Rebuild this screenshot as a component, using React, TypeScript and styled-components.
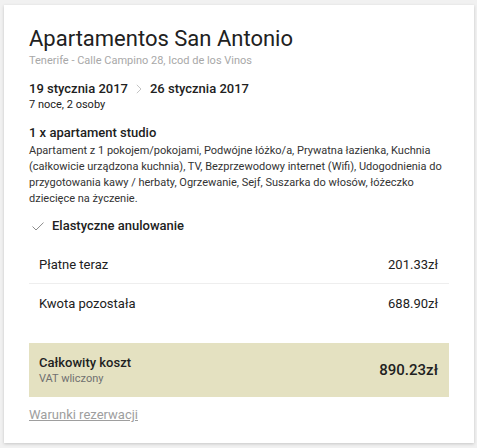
import React from "react";
import styled, { createGlobalStyle } from "styled-components";

const Global = createGlobalStyle`
  html, body { margin: 0; padding: 0; background: #f1f1f1; }
  body { font-family: Roboto, "Noto Sans", Arial, sans-serif; color: #212121; }
`;

const Page = styled.div`
  padding: 5px 3px 5px 4px;
`;

const Card = styled.div`
  background: #fff;
  width: 470px;
  height: 438px;
  box-sizing: border-box;
  padding: 20px 25px 0 25px;
  box-shadow: 0 1px 3px rgba(0,0,0,0.18);
  display: flex;
  flex-direction: column;
`;

const Title = styled.h1`
  margin: 0;
  font-size: 22px;
  font-weight: 400;
  line-height: 28px;
  color: #212121;
`;

const Address = styled.div`
  margin-top: 1px;
  font-size: 11px;
  line-height: 14px;
  color: #a8a8a8;
`;

const Dates = styled.div`
  display: flex;
  align-items: center;
  gap: 8px;
  margin-top: 12px;
  font-size: 13px;
  font-weight: 500;
  line-height: 18px;
`;

const Nights = styled.div`
  font-size: 11px;
  line-height: 14px;
  color: #212121;
`;

const Section = styled.div`
  margin-top: 12px;
`;

const Heading = styled.div`
  font-size: 13px;
  font-weight: 500;
  line-height: 18px;
`;

const Desc = styled.p`
  margin: 1px 0 0;
  font-size: 11px;
  line-height: 16px;
  color: #333;
  white-space: nowrap;
`;

const Feature = styled.div`
  display: flex;
  align-items: center;
  gap: 8px;
  margin-top: 10px;
  padding-left: 3px;
  font-size: 13px;
  font-weight: 500;
  line-height: 18px;
`;

const Rows = styled.div`
  margin-top: 10px;
`;

const Row = styled.div<{ $divider?: boolean }>`
  display: flex;
  justify-content: space-between;
  align-items: center;
  height: 38px;
  padding: 0 11px 0 10px;
  font-size: 13px;
  color: #212121;
  border-bottom: ${(p) => (p.$divider ? "1px solid #eeeeee" : "1px solid transparent")};
`;

const Total = styled.div`
  margin-top: 20px;
  background: #e4e1c1;
  height: 54px;
  box-sizing: border-box;
  padding: 0 11px 0 10px;
  display: flex;
  justify-content: space-between;
  align-items: center;
`;

const TotalLabel = styled.div`
  font-size: 13px;
  font-weight: 500;
  line-height: 17px;
`;

const Vat = styled.div`
  font-size: 11px;
  line-height: 15px;
  color: #707070;
`;

const Amount = styled.div`
  font-size: 15px;
  font-weight: 500;
  color: #212121;
`;

const Link = styled.a`
  margin-top: 9px;
  font-size: 13px;
  line-height: 18px;
  color: #9e9e9e;
  text-decoration: underline;
  align-self: flex-start;
`;

export default function App() {
  return (
    <Page>
      <Global />
      <Card>
        <Title>Apartamentos San Antonio</Title>
        <Address>Tenerife - Calle Campino 28, Icod de los Vinos</Address>
        <Dates>
          <span>19 stycznia 2017</span>
          <svg width="6" height="10" viewBox="0 0 6 10">
            <path d="M0.8 0.8 L5 5 L0.8 9.2" fill="none" stroke="#c4c4c4" strokeWidth="1" />
          </svg>
          <span>26 stycznia 2017</span>
        </Dates>
        <Nights>7 noce, 2 osoby</Nights>
        <Section>
          <Heading>1 x apartament studio</Heading>
          <Desc>
            Apartament z 1 pokojem/pokojami, Podwójne łóżko/a, Prywatna łazienka, Kuchnia
            <br />
            (całkowicie urządzona kuchnia), TV, Bezprzewodowy internet (Wifi), Udogodnienia do
            <br />
            przygotowania kawy / herbaty, Ogrzewanie, Sejf, Suszarka do włosów, łóżeczko
            <br />
            dziecięce na życzenie.
          </Desc>
        </Section>
        <Feature>
          <svg width="12" height="9" viewBox="0 0 12 9">
            <path d="M0.5 4.5 L4 8 L11.5 0.6" fill="none" stroke="#8c8c8c" strokeWidth="1" />
          </svg>
          <span>Elastyczne anulowanie</span>
        </Feature>
        <Rows>
          <Row $divider>
            <span>Płatne teraz</span>
            <span>201.33zł</span>
          </Row>
          <Row>
            <span>Kwota pozostała</span>
            <span>688.90zł</span>
          </Row>
        </Rows>
        <Total>
          <div>
            <TotalLabel>Całkowity koszt</TotalLabel>
            <Vat>VAT wliczony</Vat>
          </div>
          <Amount>890.23zł</Amount>
        </Total>
        <Link href="#">Warunki rezerwacji</Link>
      </Card>
    </Page>
  );
}
